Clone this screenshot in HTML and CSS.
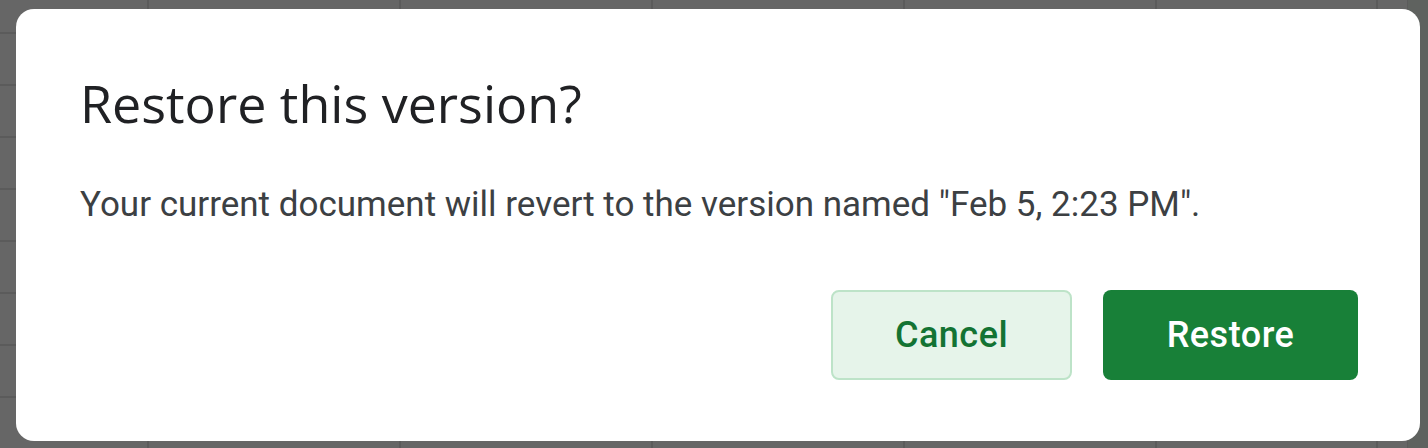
FILE: index.html
```html
<!DOCTYPE html>
<html lang="en">
<head>
<meta charset="utf-8">
<title>Restore this version?</title>
<link rel="stylesheet" href="styles.css">
</head>
<body>
<div class="sheet">
  <div class="dialog" role="dialog" aria-labelledby="dlg-title">
    <h1 class="dialog-title" id="dlg-title">Restore this version?</h1>
    <p class="dialog-text">Your current document will revert to the version named "Feb 5, 2:23 PM".</p>
    <div class="dialog-actions">
      <button class="btn btn-cancel" type="button">Cancel</button>
      <button class="btn btn-restore" type="button">Restore</button>
    </div>
  </div>
</div>
</body>
</html>
```

FILE: styles.css
```css
html, body {
  margin: 0;
  padding: 0;
}

body {
  width: 1428px;
  height: 448px;
  overflow: hidden;
  background-color: #666666;
}

.sheet {
  width: 1428px;
  height: 448px;
  box-sizing: border-box;
  padding: 9px 8px 7px 16px;
  background-color: #666666;
  background-image:
    linear-gradient(to right, transparent 1376px, #5b5b5b 1376px, #5b5b5b 1378px, transparent 1378px),
    linear-gradient(to right, transparent 1408px, #5f625f 1408px),
    repeating-linear-gradient(to right, transparent 0, transparent 147px, #5b5b5b 147px, #5b5b5b 149px, transparent 149px, transparent 252px),
    repeating-linear-gradient(to bottom, transparent 0, transparent 32px, #5b5b5b 32px, #5b5b5b 34px, transparent 34px, transparent 52px);
}

.dialog {
  width: 1404px;
  height: 432px;
  box-sizing: border-box;
  background: #ffffff;
  border-radius: 18px;
  padding: 62px 62px 0 64px;
  display: flex;
  flex-direction: column;
}

.dialog-title {
  margin: 0;
  font-family: "Open Sans", "Roboto", sans-serif;
  font-weight: 400;
  font-size: 52px;
  line-height: 64px;
  color: #202124;
}

.dialog-text {
  margin: 46px 0 0 0;
  font-family: "Roboto", "Liberation Sans", sans-serif;
  font-size: 35px;
  line-height: 48px;
  color: #3c4043;
}

.dialog-actions {
  margin-top: 61px;
  display: flex;
  justify-content: flex-end;
  gap: 31px;
}

.btn {
  height: 90px;
  box-sizing: border-box;
  border-radius: 8px;
  font-family: "Roboto", "Liberation Sans", sans-serif;
  font-weight: 500;
  font-size: 36px;
  letter-spacing: 0.5px;
  cursor: pointer;
}

.btn-cancel {
  width: 241px;
  background: #e6f4ea;
  border: 2px solid #bde3c8;
  color: #137333;
}

.btn-restore {
  width: 255px;
  background: #188038;
  border: none;
  color: #ffffff;
}
```
